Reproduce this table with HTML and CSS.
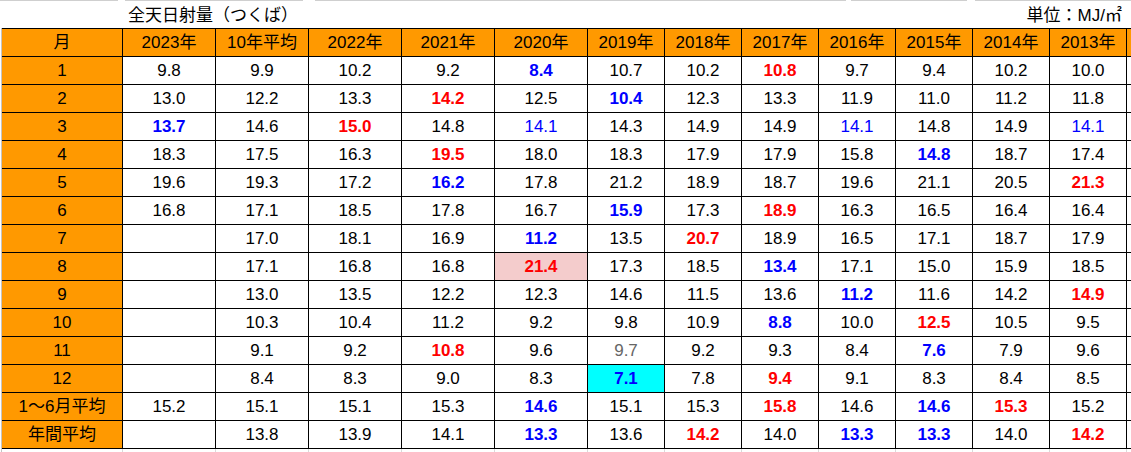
FILE: index.html
```html
<!DOCTYPE html>
<html lang="ja">
<head>
<meta charset="utf-8">
<title>全天日射量（つくば）</title>
<link rel="stylesheet" href="styles.css">
</head>
<body>
<div class="page">
  <div class="topline">
    <span class="seg s1"></span><span class="seg s2"></span><span class="seg s3"></span><span class="seg s4"></span><span class="seg s5"></span>
  </div>
  <div class="titlerow">
    <span class="title">全天日射量（つくば）</span>
    <span class="unit">単位：MJ/㎡</span>
  </div>
  <div class="sheet">
    <div class="c h">月</div><div class="c h">2023年</div><div class="c h">10年平均</div><div class="c h">2022年</div><div class="c h">2021年</div><div class="c h">2020年</div><div class="c h">2019年</div><div class="c h">2018年</div><div class="c h">2017年</div><div class="c h">2016年</div><div class="c h">2015年</div><div class="c h">2014年</div><div class="c h">2013年</div><div class="c h"></div>

    <div class="c h">1</div><div class="c">9.8</div><div class="c">9.9</div><div class="c">10.2</div><div class="c">9.2</div><div class="c b">8.4</div><div class="c">10.7</div><div class="c">10.2</div><div class="c r">10.8</div><div class="c">9.7</div><div class="c">9.4</div><div class="c">10.2</div><div class="c">10.0</div><div class="c"></div>

    <div class="c h">2</div><div class="c">13.0</div><div class="c">12.2</div><div class="c">13.3</div><div class="c r">14.2</div><div class="c">12.5</div><div class="c b">10.4</div><div class="c">12.3</div><div class="c">13.3</div><div class="c">11.9</div><div class="c">11.0</div><div class="c">11.2</div><div class="c">11.8</div><div class="c"></div>

    <div class="c h">3</div><div class="c b">13.7</div><div class="c">14.6</div><div class="c r">15.0</div><div class="c">14.8</div><div class="c bl">14.1</div><div class="c">14.3</div><div class="c">14.9</div><div class="c">14.9</div><div class="c bl">14.1</div><div class="c">14.8</div><div class="c">14.9</div><div class="c bl">14.1</div><div class="c"></div>

    <div class="c h">4</div><div class="c">18.3</div><div class="c">17.5</div><div class="c">16.3</div><div class="c r">19.5</div><div class="c">18.0</div><div class="c">18.3</div><div class="c">17.9</div><div class="c">17.9</div><div class="c">15.8</div><div class="c b">14.8</div><div class="c">18.7</div><div class="c">17.4</div><div class="c"></div>

    <div class="c h">5</div><div class="c">19.6</div><div class="c">19.3</div><div class="c">17.2</div><div class="c b">16.2</div><div class="c">17.8</div><div class="c">21.2</div><div class="c">18.9</div><div class="c">18.7</div><div class="c">19.6</div><div class="c">21.1</div><div class="c">20.5</div><div class="c r">21.3</div><div class="c"></div>

    <div class="c h">6</div><div class="c">16.8</div><div class="c">17.1</div><div class="c">18.5</div><div class="c">17.8</div><div class="c">16.7</div><div class="c b">15.9</div><div class="c">17.3</div><div class="c r">18.9</div><div class="c">16.3</div><div class="c">16.5</div><div class="c">16.4</div><div class="c">16.4</div><div class="c"></div>

    <div class="c h">7</div><div class="c"></div><div class="c">17.0</div><div class="c">18.1</div><div class="c">16.9</div><div class="c b">11.2</div><div class="c">13.5</div><div class="c r">20.7</div><div class="c">18.9</div><div class="c">16.5</div><div class="c">17.1</div><div class="c">18.7</div><div class="c">17.9</div><div class="c"></div>

    <div class="c h">8</div><div class="c"></div><div class="c">17.1</div><div class="c">16.8</div><div class="c">16.8</div><div class="c r pink">21.4</div><div class="c">17.3</div><div class="c">18.5</div><div class="c b">13.4</div><div class="c">17.1</div><div class="c">15.0</div><div class="c">15.9</div><div class="c">18.5</div><div class="c"></div>

    <div class="c h">9</div><div class="c"></div><div class="c">13.0</div><div class="c">13.5</div><div class="c">12.2</div><div class="c">12.3</div><div class="c">14.6</div><div class="c">11.5</div><div class="c">13.6</div><div class="c b">11.2</div><div class="c">11.6</div><div class="c">14.2</div><div class="c r">14.9</div><div class="c"></div>

    <div class="c h">10</div><div class="c"></div><div class="c">10.3</div><div class="c">10.4</div><div class="c">11.2</div><div class="c">9.2</div><div class="c">9.8</div><div class="c">10.9</div><div class="c b">8.8</div><div class="c">10.0</div><div class="c r">12.5</div><div class="c">10.5</div><div class="c">9.5</div><div class="c"></div>

    <div class="c h">11</div><div class="c"></div><div class="c">9.1</div><div class="c">9.2</div><div class="c r">10.8</div><div class="c">9.6</div><div class="c g">9.7</div><div class="c">9.2</div><div class="c">9.3</div><div class="c">8.4</div><div class="c b">7.6</div><div class="c">7.9</div><div class="c">9.6</div><div class="c"></div>

    <div class="c h">12</div><div class="c"></div><div class="c">8.4</div><div class="c">8.3</div><div class="c">9.0</div><div class="c">8.3</div><div class="c b cyan">7.1</div><div class="c">7.8</div><div class="c r">9.4</div><div class="c">9.1</div><div class="c">8.3</div><div class="c">8.4</div><div class="c">8.5</div><div class="c"></div>

    <div class="c h">1～6月平均</div><div class="c">15.2</div><div class="c">15.1</div><div class="c">15.1</div><div class="c">15.3</div><div class="c b">14.6</div><div class="c">15.1</div><div class="c">15.3</div><div class="c r">15.8</div><div class="c">14.6</div><div class="c b">14.6</div><div class="c r">15.3</div><div class="c">15.2</div><div class="c"></div>

    <div class="c h">年間平均</div><div class="c"></div><div class="c">13.8</div><div class="c">13.9</div><div class="c">14.1</div><div class="c b">13.3</div><div class="c">13.6</div><div class="c r">14.2</div><div class="c">14.0</div><div class="c b">13.3</div><div class="c b">13.3</div><div class="c">14.0</div><div class="c r">14.2</div><div class="c"></div>
  </div>
  <div class="below">
    <div></div><div></div><div></div><div></div><div></div><div></div><div></div><div></div><div></div><div></div><div></div><div></div><div></div><div></div>
  </div>
</div>
</body>
</html>
```

FILE: styles.css
```css
html, body {
  margin: 0;
  padding: 0;
  background: #ffffff;
}

body {
  font-family: "Liberation Sans", "Noto Sans CJK JP", sans-serif;
  font-size: 17px;
  color: #000000;
  width: 1131px;
  height: 452px;
  overflow: hidden;
}

.page {
  width: 1131px;
}

.topline {
  display: flex;
  height: 1px;
}

.seg {
  display: block;
  height: 1px;
  background: #cfcfcf;
}

.s1 { margin-left: 0; width: 118px; }
.s2 { margin-left: 7px; width: 178px; }
.s3 { margin-left: 12px; width: 531px; }
.s4 { margin-left: 5px; width: 116px; }
.s5 { margin-left: 8px; flex: 1; }

.titlerow {
  display: flex;
  justify-content: space-between;
  align-items: center;
  height: 27px;
  line-height: 27px;
  padding-left: 128px;
  padding-right: 9px;
}

.title,
.unit {
  white-space: nowrap;
  padding-top: 1px;
}

.sheet {
  display: grid;
  grid-template-columns: 120px repeat(5, 92px) repeat(7, 76px) 1fr;
  grid-auto-rows: 27px;
  gap: 1px;
  padding: 1px 0 1px 0;
  margin-left: 1px;
  border-left: 1px solid #c4c4c4;
  background: #000000;
}

.c {
  background: #ffffff;
  text-align: center;
  line-height: 27px;
  white-space: nowrap;
  overflow: hidden;
}

.h {
  background: #ff9900;
}

.b {
  color: #0000ff;
  font-weight: bold;
}

.r {
  color: #ff0000;
  font-weight: bold;
}

.bl {
  color: #0000ff;
}

.g {
  color: #666666;
}

.pink {
  background: #f4cccc;
}

.cyan {
  background: #00ffff;
}

.below {
  display: grid;
  grid-template-columns: 120px repeat(5, 92px) repeat(7, 76px) 1fr;
  grid-auto-rows: 3px;
  column-gap: 1px;
  margin-left: 1px;
  border-left: 1px solid #c4c4c4;
  background: #dadada;
}

.below div {
  background: #ffffff;
}
```
